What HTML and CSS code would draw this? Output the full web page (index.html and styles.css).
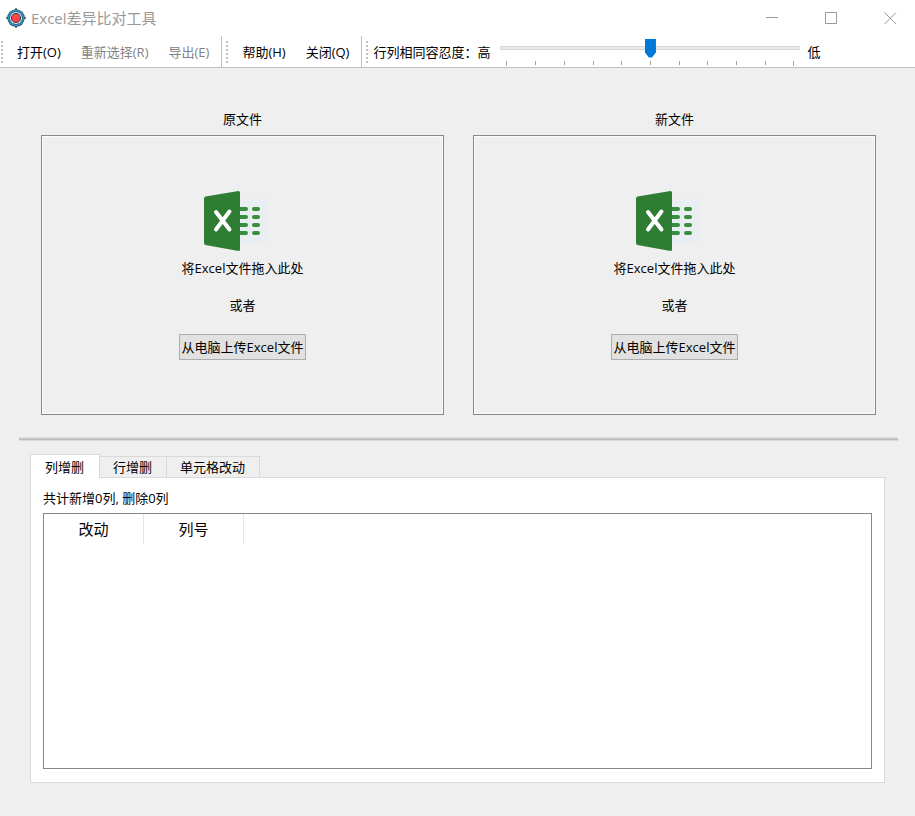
FILE: index.html
```html
<!DOCTYPE html>
<html lang="zh-CN">
<head>
<meta charset="utf-8">
<title>Excel差异比对工具</title>
<link rel="stylesheet" href="styles.css">
</head>
<body>
<svg class="defs" aria-hidden="true">
  <symbol id="excel" viewBox="0 0 78 64">
    <path d="M34 11H62Q63 11 63 12V54Q63 55 62 55H34Z" fill="#e9eef2"/>
    <path d="M36 19H42Q44 19 44 21Q44 23 42 23H36ZM36 27H42Q44 27 44 29Q44 31 42 31H36ZM36 35H42Q44 35 44 37Q44 39 42 39H36ZM36 43H42Q44 43 44 45Q44 47 42 47H36Z" fill="#388e3c"/>
    <path d="M50 21H54M50 29H54M50 37H54M50 45H54" stroke="#388e3c" stroke-width="4" stroke-linecap="round" fill="none"/>
    <path d="M1.5 8.500L34.500 3Q36 3 36 4.500V61.500Q36 63 34.500 63L1.500 57Q0 56.500 0 55V10.500Q0 9 1.500 8.500Z" fill="#2e7d32"/>
    <path d="M12 24L25.500 41.500M25.500 23.500L12 41.500" stroke="#fff" stroke-width="4" stroke-linecap="round" fill="none"/>
  </symbol>
</svg>
<header class="titlebar">
  <svg class="logo" viewBox="0 0 20 20" aria-hidden="true">
    <path d="M10 0V20M0 10H20" stroke="#4b5560" stroke-width="1.500"/>
    <circle cx="10" cy="10" r="8.700" fill="#25364b"/>
    <circle cx="10" cy="10" r="7.300" fill="none" stroke="#2c93bd" stroke-width="1.800"/>
    <circle cx="10" cy="10" r="6" fill="#f3f3f3"/>
    <circle cx="10" cy="10" r="4.600" fill="#ff4545" stroke="#26394e" stroke-width="1"/>
  </svg>
  <h1 class="title">Excel差异比对工具</h1>
  <div class="window-controls">
    <button class="window-button" aria-label="最小化"><svg viewBox="0 0 13 13"><path d="M0 5.500H12"/></svg></button>
    <button class="window-button" aria-label="最大化"><svg viewBox="0 0 13 13"><path d="M.5 .5H11.500V11.500H.5Z"/></svg></button>
    <button class="window-button" aria-label="关闭窗口"><svg viewBox="0 0 13 13"><path d="M.5 .5L12 12M12 .5L.5 12"/></svg></button>
  </div>
</header>
<nav class="toolbar">
  <div class="tool-group">
    <span class="grip"></span>
    <button class="tool">打开(O)</button>
    <button class="tool" disabled>重新选择(R)</button>
    <button class="tool" disabled>导出(E)</button>
  </div>
  <div class="tool-group">
    <span class="grip"></span>
    <button class="tool">帮助(H)</button>
    <button class="tool">关闭(Q)</button>
  </div>
  <div class="tool-group tolerance">
    <span class="grip"></span>
    <label for="tolerance">行列相同容忍度：高</label>
    <div class="slider">
      <input id="tolerance" type="range" min="0" max="10" value="5">
      <div class="ticks"><i></i><i></i><i></i><i></i><i></i><i></i><i></i><i></i><i></i><i></i><i></i></div>
    </div>
    <span>低</span>
  </div>
</nav>
<main class="content">
  <div class="files">
    <section class="file">
      <h2 class="file-title">原文件</h2>
      <div class="dropzone">
        <svg class="excel-icon" aria-hidden="true"><use href="#excel"/></svg>
        <p class="hint">将Excel文件拖入此处</p>
        <p class="hint or">或者</p>
        <button class="upload">从电脑上传Excel文件</button>
      </div>
    </section>
    <section class="file">
      <h2 class="file-title">新文件</h2>
      <div class="dropzone">
        <svg class="excel-icon" aria-hidden="true"><use href="#excel"/></svg>
        <p class="hint">将Excel文件拖入此处</p>
        <p class="hint or">或者</p>
        <button class="upload">从电脑上传Excel文件</button>
      </div>
    </section>
  </div>
  <hr class="splitter">
  <section class="results">
    <div class="tabs" role="tablist">
      <button class="tab active" role="tab" aria-selected="true">列增删</button>
      <button class="tab" role="tab" aria-selected="false">行增删</button>
      <button class="tab" role="tab" aria-selected="false">单元格改动</button>
    </div>
    <div class="pane" role="tabpanel">
      <p class="summary">共计新增0列, 删除0列</p>
      <div class="table-frame">
        <table class="changes">
          <thead><tr><th>改动</th><th>列号</th></tr></thead>
          <tbody></tbody>
        </table>
      </div>
    </div>
  </section>
</main>
</body>
</html>
```
FILE: styles.css
```css
* { box-sizing: border-box; }

body {
  margin: 0;
  min-height: 100vh;
  display: flex;
  flex-direction: column;
  background: #efefef;
  color: #000;
  font: 13px/18px "Open Sans", "Noto Sans CJK SC", sans-serif;
}

button {
  font: inherit;
  color: inherit;
  margin: 0;
  padding: 0;
  border: 0;
  background: none;
}

h1, h2, p { margin: 0; font-weight: 400; }

.defs { position: absolute; width: 0; height: 0; }

.titlebar {
  display: flex;
  align-items: center;
  height: 36px;
  padding: 0 18px 0 6px;
  background: #fff;
}

.logo { width: 20px; height: 20px; }

.title {
  margin-left: 5px;
  font-size: 15px;
  line-height: 20px;
  color: #999;
}

.window-controls { display: flex; gap: 46px; margin-left: auto; }
.window-button { width: 13px; height: 13px; }
.window-button svg { display: block; width: 13px; height: 13px; fill: none; stroke: #999; }

.toolbar {
  display: flex;
  height: 32px;
  background: #fff;
  border-bottom: 1px solid #c0c0c0;
}

.tool-group {
  display: flex;
  align-items: center;
  gap: 2px;
  padding-right: 3px;
  border-right: 1px solid #c0c0c0;
}
.tool-group + .tool-group { padding-left: 4px; }

.grip {
  width: 2px;
  height: 22px;
  margin: 0 3px 0 1px;
  background: repeating-linear-gradient(#c4c4c4 0 2px, transparent 2px 4px);
}
.tool-group + .tool-group .grip { margin-left: 0; }

.tool { height: 28px; padding: 0 9px; }
.tool:disabled { color: #838383; }

.tolerance { flex: 1; border-right: 0; }

.slider { width: 300px; height: 28px; margin: 0 5px 0 8px; }

.slider input {
  display: block;
  width: 100%;
  height: 20px;
  margin: 0;
  appearance: none;
  background: none;
}
.slider input::-webkit-slider-runnable-track {
  height: 4px;
  background: #e7eaea;
  border: 1px solid #d6d6d6;
}
.slider input::-webkit-slider-thumb {
  appearance: none;
  width: 11px;
  height: 19px;
  margin-top: -8px;
  background: #0078d7;
  clip-path: polygon(0 0, 100% 0, 100% 72%, 65% 100%, 35% 100%, 0 72%);
}

.ticks { display: flex; justify-content: space-between; padding: 3px 6px 0; }
.ticks i { width: 1px; height: 4px; background: #a8a89c; }
.ticks i:first-child, .ticks i:last-child { height: 5px; }

.content { flex: 1; display: flex; flex-direction: column; }

.files {
  display: grid;
  grid-template-columns: 1fr 1fr;
  gap: 29px;
  padding: 42px 39px 0 41px;
}

.file-title {
  margin-bottom: 7px;
  text-align: center;
  font-size: 13px;
}

.dropzone {
  display: flex;
  flex-direction: column;
  align-items: center;
  min-height: 280px;
  padding-top: 52px;
  border: 1px solid #828790;
  box-shadow: inset 0 0 0 1px #fcfcfc;
}

.excel-icon { width: 78px; height: 64px; }
.hint { margin-top: 7px; }
.or { margin-top: 19px; }

.upload {
  height: 26px;
  margin-top: 20px;
  padding: 0 2px;
  border: 1px solid #adadad;
  background: #e1e1e1;
}

.splitter {
  height: 4px;
  margin: 22px 17px 0 19px;
  border: 0;
  background: linear-gradient(#dcdcdc 0 1px, #cfcfcf 1px 2px, #b8b8b8 2px 3px, #d9d9d9 3px 4px);
}

.results {
  flex: 1;
  display: flex;
  flex-direction: column;
  padding: 13px 30px 33px;
}

.tabs { display: flex; align-items: flex-end; }

.tab {
  height: 21px;
  padding: 0 14px 0 13px;
  border: 1px solid #d9d9d9;
  border-width: 1px 1px 0 0;
}
.tab.active {
  z-index: 1;
  height: 24px;
  margin-bottom: -1px;
  padding: 0 15px 0 14px;
  border-left-width: 1px;
  background: #fff;
}

.pane {
  flex: 1;
  display: flex;
  flex-direction: column;
  padding: 11px 12px 13px;
  border: 1px solid #d9d9d9;
  background: #fff;
}

.table-frame {
  flex: 1;
  margin-top: 6px;
  border: 1px solid #828790;
}

.changes { border-collapse: separate; border-spacing: 0; table-layout: fixed; width: 200px; }
.changes th {
  height: 30px;
  padding: 0;
  border-right: 1px solid #e5e5e5;
  font-size: 15px;
  font-weight: 400;
}
```
